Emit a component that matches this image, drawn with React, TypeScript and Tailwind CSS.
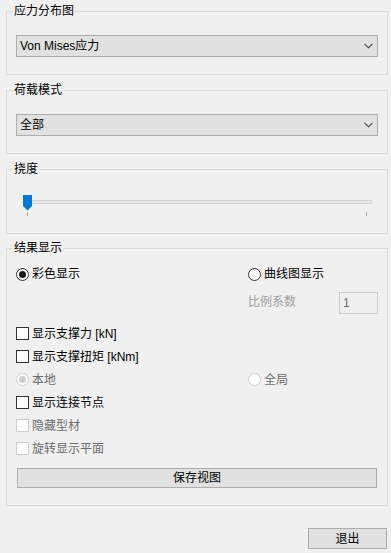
import React from "react";

const font = { fontFamily: '"Liberation Sans", "Noto Sans CJK SC", sans-serif' };

function Chevron() {
  return (
    <svg width="9" height="6" viewBox="0 0 9 6" className="mr-[4px]">
      <path d="M0.5 0.8 L4.5 4.8 L8.5 0.8" fill="none" stroke="#404040" strokeWidth="1.1" />
    </svg>
  );
}

function Combo({ value }: { value: string }) {
  return (
    <div className="flex h-[22px] items-center justify-between border border-[#adadad] bg-[#e1e1e1] pl-[3px] text-[12px] text-black">
      <span>{value}</span>
      <Chevron />
    </div>
  );
}

function Group({ title, children, className = "" }: { title: string; children: React.ReactNode; className?: string }) {
  return (
    <fieldset className={"mx-[6px] w-[382px] border border-[#dcdcdc] px-[9px] " + className}>
      <legend className="-ml-[3px] px-[1px] text-[12px] leading-[16px] text-black">{title}</legend>
      {children}
    </fieldset>
  );
}

function Radio({ label, checked, disabled }: { label: string; checked?: boolean; disabled?: boolean }) {
  return (
    <div className="flex items-center gap-[3px]">
      <span
        className={
          "flex h-[13px] w-[13px] items-center justify-center rounded-full border bg-white " +
          (disabled ? "border-[#cccccc]" : "border-[#333333]")
        }
      >
        {checked && (
          <span className={"h-[7px] w-[7px] rounded-full " + (disabled ? "bg-[#cccccc]" : "bg-[#1a1a1a]")} />
        )}
      </span>
      <span className={"text-[12px] leading-[16px] " + (disabled ? "text-[#6d6d6d]" : "text-black")}>{label}</span>
    </div>
  );
}

function Check({ label, disabled }: { label: string; disabled?: boolean }) {
  return (
    <div className="flex h-[23px] items-center gap-[3px]">
      <span className={"h-[13px] w-[13px] border bg-white " + (disabled ? "border-[#cccccc]" : "border-[#333333]")} />
      <span className={"text-[12px] leading-[16px] " + (disabled ? "text-[#6d6d6d]" : "text-black")}>{label}</span>
    </div>
  );
}

function Slider() {
  return (
    <svg width="362" height="22" viewBox="0 0 362 22" className="block">
      <rect x="9.5" y="5.5" width="346" height="3" fill="#e7e7e7" stroke="#d6d6d6" />
      <path d="M7 0 H16 V11 L11.5 15.5 L7 11 Z" fill="#0078d7" />
      <line x1="11.5" y1="17" x2="11.5" y2="21" stroke="#a8a8a8" />
      <line x1="350.5" y1="17" x2="350.5" y2="21" stroke="#a8a8a8" />
    </svg>
  );
}

export default function App() {
  return (
    <div className="h-[553px] w-[391px] overflow-hidden bg-[#f0f0f0] pt-[3px]" style={font}>
      <Group title="应力分布图" className="pt-[16px] pb-[17px]">
        <Combo value="Von Mises应力" />
      </Group>

      <Group title="荷载模式" className="mt-[7px] pt-[16px] pb-[17px]">
        <Combo value="全部" />
      </Group>

      <Group title="挠度" className="mt-[7px] pt-[18px] pb-[16px]">
        <Slider />
      </Group>

      <Group title="结果显示" className="mt-[6px] pt-[10px] pb-[17px]">
        <div className="grid grid-cols-[232px_1fr]">
          <Radio label="彩色显示" checked />
          <Radio label="曲线图显示" />
        </div>
        <div className="mt-[10px] grid grid-cols-[232px_1fr]">
          <div />
          <div className="flex items-start justify-between">
            <span className="mt-[2px] text-[12px] leading-[16px] text-[#a0a0a0]">比例系数</span>
            <div className="flex h-[22px] w-[39px] items-center border border-[#cccccc] bg-[#f0f0f0] pl-[3px] text-[12px] text-[#6d6d6d]">
              1
            </div>
          </div>
        </div>
        <div className="mt-[8px]">
          <Check label="显示支撑力 [kN]" />
          <Check label="显示支撑扭矩 [kNm]" />
          <div className="grid h-[23px] grid-cols-[232px_1fr] items-center">
            <Radio label="本地" checked disabled />
            <Radio label="全局" disabled />
          </div>
          <Check label="显示连接节点" />
          <Check label="隐藏型材" disabled />
          <Check label="旋转显示平面" disabled />
        </div>
        <button className="mx-[1px] mt-[8px] flex h-[20px] w-[360px] items-center justify-center border border-[#adadad] bg-[#e1e1e1] text-[12px] text-black">
          保存视图
        </button>
      </Group>

      <div className="mt-[22px] flex justify-end pr-[4px]">
        <button className="flex h-[21px] w-[79px] items-center justify-center border border-[#adadad] bg-[#e1e1e1] text-[12px] text-black">
          退出
        </button>
      </div>
    </div>
  );
}
